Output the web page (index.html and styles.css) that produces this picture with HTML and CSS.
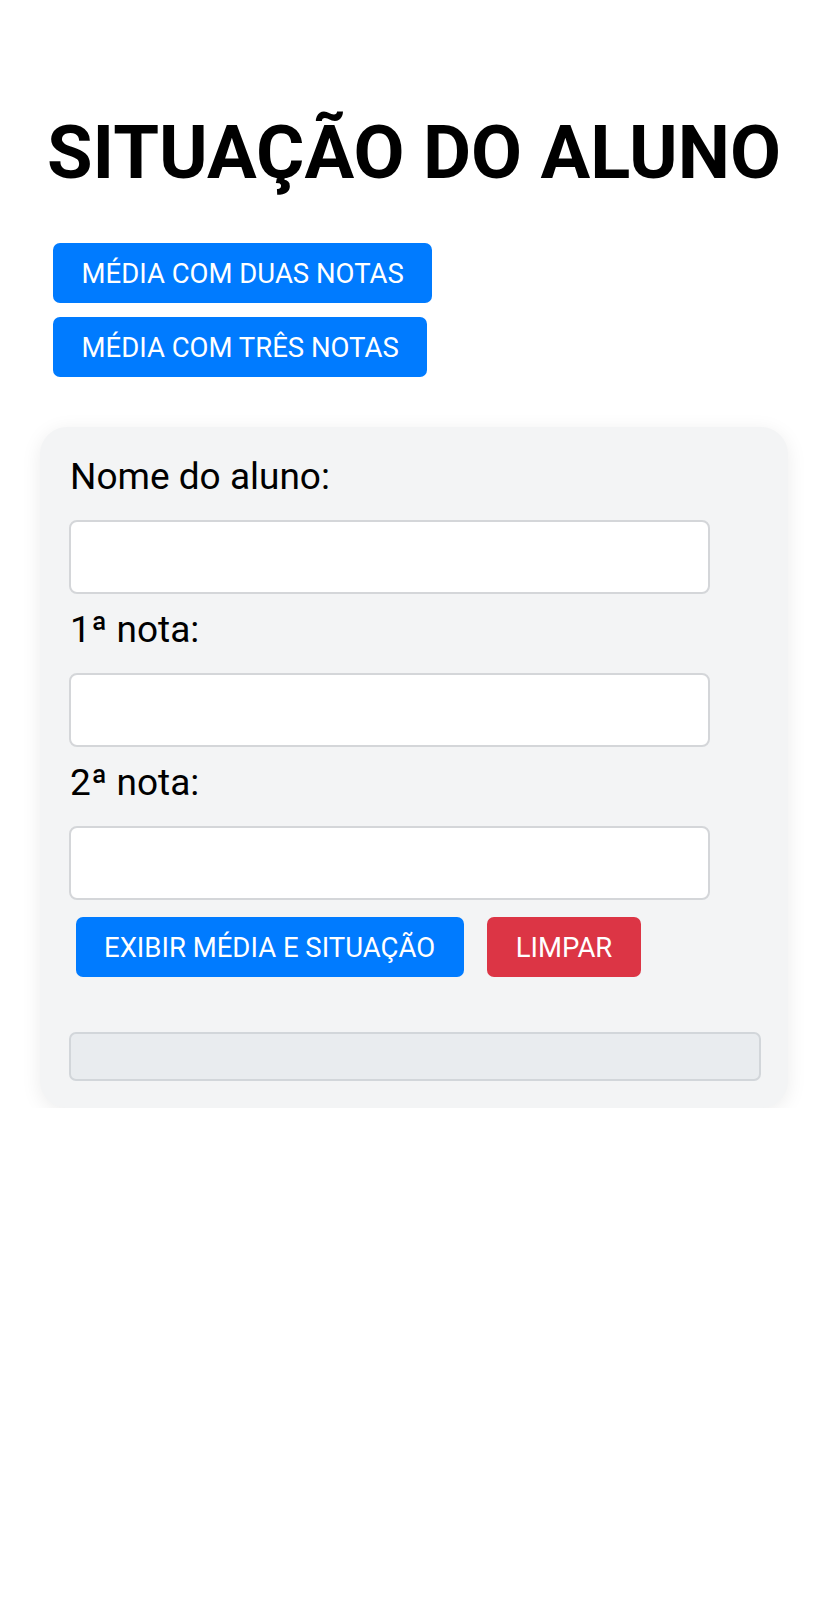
FILE: index.html
```html
<!DOCTYPE html>
<html lang="pt-BR">
<head>
<meta charset="utf-8">
<title>Situação do aluno</title>
<link rel="stylesheet" href="styles.css">
</head>
<body>
<h1 class="title">SITUAÇÃO DO ALUNO</h1>
<div class="modes">
  <button class="btn btn-blue">MÉDIA COM DUAS NOTAS</button>
  <button class="btn btn-blue">MÉDIA COM TRÊS NOTAS</button>
</div>
<form class="card">
  <label class="label" for="nome">Nome do aluno:</label>
  <input class="field" id="nome" type="text">
  <label class="label" for="n1">1ª nota:</label>
  <input class="field" id="n1" type="text">
  <label class="label" for="n2">2ª nota:</label>
  <input class="field" id="n2" type="text">
  <div class="actions">
    <button type="button" class="btn btn-blue">EXIBIR MÉDIA E SITUAÇÃO</button>
    <button type="button" class="btn btn-red">LIMPAR</button>
  </div>
  <div class="output"></div>
</form>
</body>
</html>
```
FILE: styles.css
```css
body {
  margin: 0;
  background: #fff;
  font-family: Roboto, "Noto Sans", Arial, sans-serif;
  color: #000;
}
.title {
  margin: 0;
  padding: 116px 0 0 47px;
  font-size: 74px;
  line-height: 1;
  font-weight: 700;
  letter-spacing: 0;
}
.modes {
  display: flex;
  flex-direction: column;
  align-items: flex-start;
  gap: 14px;
  padding: 53px 0 0 53px;
}
.btn {
  font-family: Roboto, "Noto Sans", Arial, sans-serif;
  font-size: 27.5px;
  height: 60px;
  padding: 0 28.5px;
  border: none;
  border-radius: 7px;
  color: #fff;
  cursor: pointer;
}
.btn-blue { background: #007bff; }
.btn-red { background: #dc3545; }
.card {
  box-sizing: border-box;
  width: 748px;
  margin: 50px 0 0 40px;
  padding: 29px 27px 27px 29px;
  background: #f3f4f5;
  border-radius: 27px;
  box-shadow: 0 4px 20px rgba(0, 0, 0, 0.08);
  display: flex;
  flex-direction: column;
  align-items: flex-start;
}
.label {
  font-size: 37px;
  line-height: 42px;
  margin: 0 0 22px 1px;
}
.field {
  box-sizing: border-box;
  width: 641px;
  height: 74px;
  margin: 0 0 15px 0;
  border: 2px solid #d4d6d9;
  border-radius: 8px;
  background: #fff;
}
.actions {
  display: flex;
  gap: 23.5px;
  margin: 2px 0 0 6.5px;
}
.output {
  box-sizing: border-box;
  align-self: stretch;
  height: 49px;
  margin-top: 55px;
  background: #e9ecef;
  border: 2px solid #d2d6da;
  border-radius: 7px;
}
```
